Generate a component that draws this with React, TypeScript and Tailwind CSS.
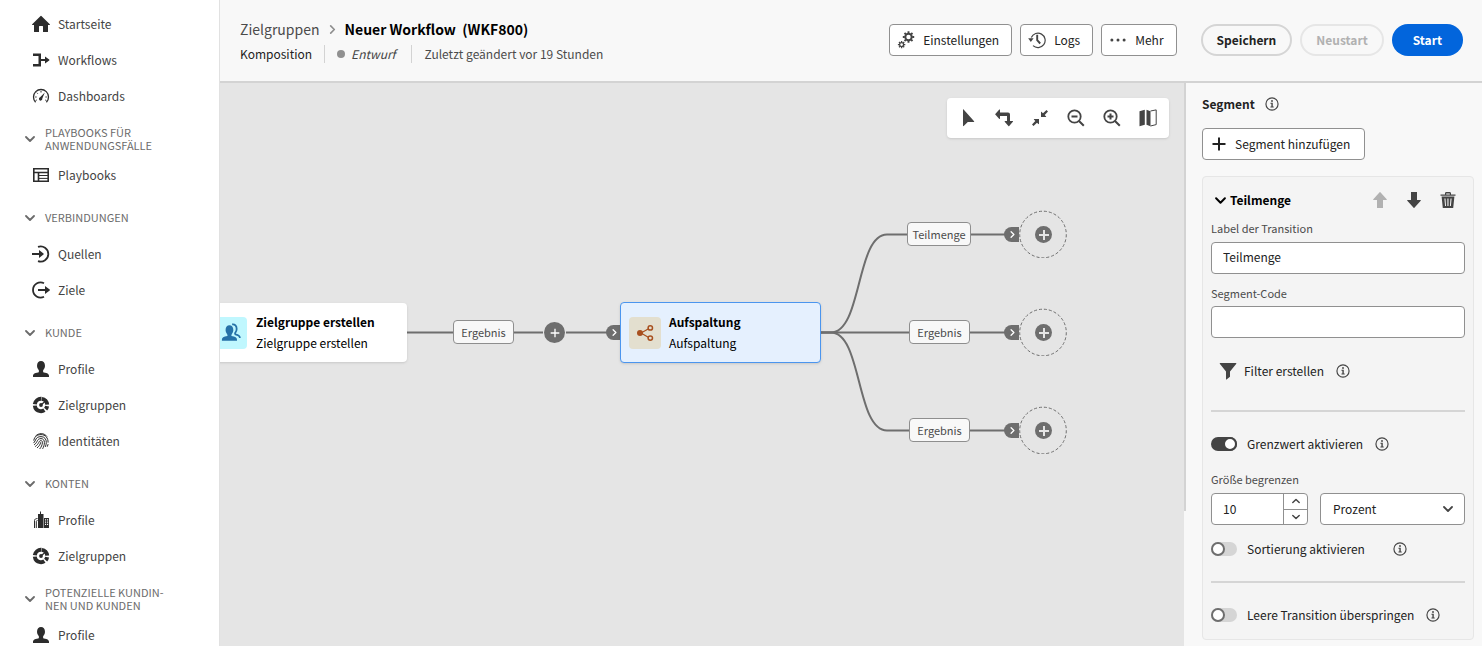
import type { ReactNode } from 'react';

type IconProps = { className?: string };

function Icon({ className = 'size-[18px]', children }: IconProps & { children: ReactNode }) {
  return (
    <svg viewBox="0 0 18 18" className={`shrink-0 ${className}`} fill="currentColor" aria-hidden="true">
      {children}
    </svg>
  );
}

const HomeIcon = () => (
  <Icon>
    <path d="M9.4.9 17.8 9.3c.3.3.1.8-.3.8H16v6.4a.5.5 0 0 1-.5.5H11v-5.500a.5.5 0 0 0-.5-.5h-3a.5.5 0 0 0-.5.5V17H2.500a.5.5 0 0 1-.5-.5v-6.400H.5c-.4 0-.6-.5-.3-.8L8.600.9a.6.6 0 0 1 .8 0z" />
  </Icon>
);
const WorkflowIcon = () => (
  <Icon>
    <path d="M1 2.500h8V8h4V5.500l4.200 3.100a.5.5 0 0 1 0 .8L13 12.500V10H9v5.500H1V13h5.500V5H1z" />
  </Icon>
);
const GaugeIcon = () => (
  <Icon>
    <path d="M3.600 15.200A7.500 7.500 0 1 1 14.400 15.200" fill="none" stroke="currentColor" strokeWidth="1.300" />
    <path d="M12.800 5.600 10.300 11.600a1.700 1.700 0 1 1-2.200-1.300z" />
    <path d="M9 4v1.500M4.800 5.700l1 1M3.200 10h1.400M13.400 10h1.400M3.600 13.500l1.200-.5M14.400 13.500l-1.200-.5" stroke="currentColor" strokeWidth="1" />
  </Icon>
);
const PlaybookIcon = () => (
  <Icon>
    <path d="M1.800 2.800h14.400v12.400H1.800zM1.800 6.500h14.400M6.500 6.500v8.700" fill="none" stroke="currentColor" strokeWidth="1.600" />
    <path d="M7 9.500h9M7 12.400h9" fill="none" stroke="currentColor" strokeWidth="1" />
  </Icon>
);
const SourceIcon = () => (
  <Icon>
    <path d="M6 1.900a7.600 7.600 0 1 1 0 14.200" fill="none" stroke="currentColor" strokeWidth="1.800" />
    <path d="M0 8.100h7V5l4.500 3.600a.5.5 0 0 1 0 .8L7 13V9.900H0z" />
  </Icon>
);
const TargetIcon = () => (
  <Icon>
    <path d="M12 2.200a7.600 7.600 0 1 0 0 13.600" fill="none" stroke="currentColor" strokeWidth="1.800" />
    <path d="M6 8.100h7V5l4.700 3.600a.5.5 0 0 1 0 .8L13 13V9.900H6z" />
  </Icon>
);
const UserIcon = () => (
  <Icon>
    <path d="M11.100 11.500v-.9a1.300 1.300 0 0 1 .4-.9A5.900 5.900 0 0 0 13 5.900C13 2.900 11.400 1 9 1S5 2.900 5 5.900a5.900 5.900 0 0 0 1.500 3.800 1.300 1.300 0 0 1 .4.900v.9a.9.9 0 0 1-.8.900C2.300 12.700 1 14.300 1 15.800V17h16v-1.200c0-1.500-1.300-3.100-5.100-3.400a.9.9 0 0 1-.8-.9z" />
  </Icon>
);
const SegmentsIcon = () => (
  <Icon>
    <circle cx="9" cy="9" r="6.200" fill="none" stroke="currentColor" strokeWidth="4" strokeDasharray="8.2 1.500 3.400 1.500 12.300 1.500 9.100 1.460" transform="rotate(-82 9 9)" />
    <circle cx="9" cy="9" r="1.900" />
    <path d="M9.500 8.500 15 3.800" stroke="currentColor" strokeWidth="1.200" />
  </Icon>
);
const FingerprintIcon = () => (
  <Icon>
    <g fill="none" stroke="currentColor" strokeWidth="1" strokeLinecap="round">
      <path d="M3.500 4.200C6.500.7 12 .6 14.800 4.300M1.800 8.200C2.600 3.800 6 2.600 9 2.600c4.500 0 7.200 3.400 7.100 7.600M1.800 10.800C4.200 8.500 3.200 4.700 9 4.600c3.600 0 5.400 2.700 5.300 5.900-.1 1.600-.3 2.800-.8 4" />
      <path d="M2.400 12.700C6.200 10 4.600 6.700 9 6.600c2.300 0 3.400 1.700 3.400 3.900 0 2.300-.7 4.300-1.600 6M3.500 14.400C7.400 11.800 6.500 8.700 8.900 8.600c1.200 0 1.600 1 1.500 2.200-.2 2.300-1.100 4.200-2.500 5.900M5.300 15.700c1.700-1.400 2.900-3 3.400-5.100M16 12.500l-.6 1.800" />
    </g>
  </Icon>
);
const BuildingsIcon = () => (
  <Icon>
    <path d="M6 3h2V.500h1V3h2.500v14H6z" />
    <path fillRule="evenodd" d="M12 7h5v10h-5zm1 1.200v1.300h1.100V8.200zm2 0v1.300h1.100V8.200zm-2 2.300v1.300h1.100v-1.300zm2 0v1.300h1.100v-1.300zm-2 2.300v1.300h1.100v-1.300zm2 0v1.300h1.100v-1.300z" />
    <path d="M2.500 17v-7.500c0-1.200 1.200-2 3-2M4.300 17v-6.500c0-.6.500-1 1.200-1" fill="none" stroke="currentColor" strokeWidth="1" />
  </Icon>
);
const GearsIcon = () => (
  <svg viewBox="0 0 18 18" className="size-[18px] shrink-0" fill="none" stroke="currentColor" aria-hidden="true">
    <circle cx="11.500" cy="6" r="3.200" strokeWidth="2" />
    <path d="M11.500.3v2M11.500 9.700v2M5.800 6h2M15.200 6h2M7.500 2l1.400 1.400M14.100 8.600l1.400 1.400M15.500 2l-1.400 1.400M8.900 8.600 7.500 10" strokeWidth="1.900" />
    <circle cx="4.600" cy="13.600" r="2" strokeWidth="1.300" />
    <path d="M4.600 9.900v1.500M4.600 15.800v1.500M.9 13.600h1.500M6.800 13.600h1.500M2 11l1 1M6.200 15.200l1 1M7.200 11l-1 1M3 15.200l-1 1" strokeWidth="1.300" />
  </svg>
);
const HistoryIcon = () => (
  <Icon>
    <path d="M3.300 6.600A7.200 7.200 0 1 1 5 14.600" fill="none" stroke="currentColor" strokeWidth="1.200" />
    <path d="M.2 7.300h5.400L2.800 11z" />
    <path d="M9.200 3.800v5.400l3 3.300" fill="none" stroke="currentColor" strokeWidth="1.900" />
  </Icon>
);
const MoreIcon = () => (
  <Icon>
    <circle cx="2.900" cy="9" r="1.500" />
    <circle cx="9" cy="9" r="1.500" />
    <circle cx="15.100" cy="9" r="1.500" />
  </Icon>
);
const PointerIcon = () => (
  <Icon>
    <path d="M4 .8v16c0 .4.400.6.700.3L8.800 13h6c.4 0 .6-.5.300-.7L4.600.5C4.400.2 4 .4 4 .8z" />
  </Icon>
);
const RotateIcon = () => (
  <Icon>
    <path d="M5 .900v2.600h8a2 2 0 0 1 2 2V12h2.600c.4 0 .5.400.3.700l-3.700 4.200a.5.5 0 0 1-.8 0l-3.700-4.200c-.2-.3 0-.7.300-.7H12V7H5v2.600c0 .4-.4.500-.7.300L.3 5.600a.5.5 0 0 1 0-.7L4.300.6c.3-.2.700-.1.700.3z" />
  </Icon>
);
const CollapseIcon = () => (
  <Icon>
    <path d="M10 3.200V8h4.800c.4 0 .5-.4.300-.6L13.700 6 17 2.500 15.500 1 12 4.300l-1.400-1.400c-.2-.2-.6-.1-.6.300zM8 14.800V10H3.200c-.4 0-.5.400-.3.600L4.300 12 1 15.500 2.500 17 6 13.700l1.400 1.400c.2.200.6.100.6-.3z" />
  </Icon>
);
const ZoomOutIcon = () => (
  <Icon>
    <path d="M12 12 16.800 16.800M4.500 7.500h6" stroke="currentColor" strokeWidth="2" />
    <circle cx="7.500" cy="7.500" r="6.200" fill="none" stroke="currentColor" strokeWidth="1.800" />
  </Icon>
);
const ZoomInIcon = () => (
  <Icon>
    <path d="M12 12 16.800 16.800M4.500 7.500h6M7.500 4.500v6" stroke="currentColor" strokeWidth="2" />
    <circle cx="7.500" cy="7.500" r="6.200" fill="none" stroke="currentColor" strokeWidth="1.800" />
  </Icon>
);
const MapIcon = () => (
  <Icon>
    <path d="M.500 2.300 5.800.8v15L.500 17.200zM7.500.8l4 1.500v15l-4-1.500z" />
    <path d="M11.500 2 17.200.9v14.700L11.500 17" fill="none" stroke="currentColor" strokeWidth="1" />
  </Icon>
);
const InfoIcon = () => (
  <Icon className="size-[14px]">
    <circle cx="9" cy="9" r="7.800" fill="none" stroke="currentColor" strokeWidth="1.500" />
    <circle cx="9" cy="5.200" r="1.200" />
    <path d="M7 7.500h3v4.700h1.200v1.300H7v-1.300h1.200V8.800H7z" />
  </Icon>
);
const PlusIcon = ({ className = 'size-[18px]' }: IconProps) => (
  <Icon className={className}>
    <path d="M9 2.500v13M2.500 9h13" stroke="currentColor" strokeWidth="2" />
  </Icon>
);
const ArrowIcon = ({ className = 'size-[18px]' }: IconProps) => (
  <Icon className={className}>
    <path d="M6 17V9H2.700c-.5 0-.7-.5-.4-.8L8.600 1.200a.5.500 0 0 1 .8 0l6.300 7c.3.300.1.800-.4.800H12v8z" />
  </Icon>
);
const TrashIcon = () => (
  <Icon>
    <path d="M1.500 3.600H6V2.400C6 1.600 6.600 1 7.400 1h3.200c.8 0 1.400.6 1.400 1.400v1.200h4.500v1.200h-15zM7.200 3.600h3.600V2.400H7.200z" fillRule="evenodd" />
    <path d="M2.600 5.500h12.800L14.200 17H3.800zM5.400 7.500l.7 7.600h.9L6.500 7.500zm3 0v7.600h1.100V7.500zm3.100 0-.6 7.600h1l.7-7.600z" fillRule="evenodd" />
  </Icon>
);
const FilterIcon = () => (
  <Icon>
    <path d="M1 1h16c.3 0 .5.400.3.700L11 9.500v5.200L7.500 17.600c-.2.200-.5 0-.5-.3V9.500L.8 1.700C.6 1.400.7 1 1 1z" />
  </Icon>
);
const AudienceIcon = () => (
  <Icon className="size-5">
    <path d="M9.400 11.800v-.9a1.200 1.200 0 0 1 .3-.8 5.600 5.600 0 0 0 1.400-3.600C11.100 3.600 9.700 2 7.600 2S4.100 3.600 4.100 6.500a5.600 5.600 0 0 0 1.400 3.600 1.200 1.200 0 0 1 .3.800v.9c-3.500.4-5 1.700-5 3.200V16h13.600v-1c0-1.500-1.500-2.800-5-3.200z" />
    <path d="M10 1.200c2.600-.4 4.100 1.500 4.100 4.300a5.400 5.400 0 0 1-1.300 3.400c-.3.400-.2 1.200.2 1.400 2.500.6 4 1.700 4 3.200" fill="none" stroke="currentColor" strokeWidth="1.600" />
  </Icon>
);
const SplitIcon = () => (
  <Icon>
    <path d="M5 9 13.500 4.200M5 9l8.500 4.900" stroke="currentColor" strokeWidth="1.200" />
    <circle cx="4" cy="9" r="3" />
    <circle cx="14.300" cy="3.900" r="2.200" fill="#e3dfcf" stroke="currentColor" strokeWidth="1.500" />
    <circle cx="14.300" cy="14.100" r="2.200" fill="#e3dfcf" stroke="currentColor" strokeWidth="1.500" />
  </Icon>
);
const Chevron = ({ className = 'size-[10px]' }: IconProps) => (
  <svg viewBox="0 0 10 10" className={`shrink-0 ${className}`} fill="none" stroke="currentColor" strokeWidth="1.800" strokeLinecap="round" strokeLinejoin="round" aria-hidden="true">
    <path d="M1 3l4 4 4-4" />
  </svg>
);

type NavEntry = { label: string; icon: ReactNode };
type NavGroup = { title?: string; items: NavEntry[] };

const navigation: NavGroup[] = [
  {
    items: [
      { label: 'Startseite', icon: <HomeIcon /> },
      { label: 'Workflows', icon: <WorkflowIcon /> },
      { label: 'Dashboards', icon: <GaugeIcon /> },
    ],
  },
  { title: 'PLAYBOOKS FÜR ANWENDUNGSFÄLLE', items: [{ label: 'Playbooks', icon: <PlaybookIcon /> }] },
  {
    title: 'VERBINDUNGEN',
    items: [
      { label: 'Quellen', icon: <SourceIcon /> },
      { label: 'Ziele', icon: <TargetIcon /> },
    ],
  },
  {
    title: 'KUNDE',
    items: [
      { label: 'Profile', icon: <UserIcon /> },
      { label: 'Zielgruppen', icon: <SegmentsIcon /> },
      { label: 'Identitäten', icon: <FingerprintIcon /> },
    ],
  },
  {
    title: 'KONTEN',
    items: [
      { label: 'Profile', icon: <BuildingsIcon /> },
      { label: 'Zielgruppen', icon: <SegmentsIcon /> },
    ],
  },
  { title: 'POTENZIELLE KUNDIN- NEN UND KUNDEN', items: [{ label: 'Profile', icon: <UserIcon /> }] },
];

function Sidebar() {
  return (
    <nav className="w-[220px] shrink-0 overflow-hidden border-r border-[#e1e1e1] bg-white pt-1.5">
      {navigation.map((group, index) => (
        <section key={index}>
          {group.title && (
            <button type="button" className="flex h-11 w-full items-center gap-[10px] pt-[7px] pl-[25px] text-left text-[11px] leading-[13px] text-[#6b6b6b]">
              <Chevron />
              <span className="w-[130px]">{group.title}</span>
            </button>
          )}
          <ul className="flex flex-col gap-px">
            {group.items.map((item) => (
              <li key={item.label}>
                <a href="#" className="flex h-[35px] items-center gap-2 pl-8 text-[#2c2c2c]">
                  {item.icon}
                  <span className="text-[#444]">{item.label}</span>
                </a>
              </li>
            ))}
          </ul>
        </section>
      ))}
    </nav>
  );
}

function Header() {
  const outlined = 'flex h-8 items-center gap-2 rounded border border-[#909090] bg-white pr-3 pl-[7px] text-[#222]';
  return (
    <header className="flex h-[83px] shrink-0 items-start justify-between border-b-2 border-[#d3d3d3] bg-[#f8f8f8] pr-[19px] pl-5">
      <div className="pt-[18px]">
        <div className="flex h-[22px] items-center text-sm">
          <a href="#" className="text-[#4b4b4b]">Zielgruppen</a>
          <Chevron className="mx-2 size-[9px] -rotate-90 text-[#8e8e8e]" />
          <h1 className="font-bold text-black">Neuer Workflow&nbsp; (WKF800)</h1>
        </div>
        <div className="mt-[5px] flex h-[18px] items-center">
          <span className="text-[#222]">Komposition</span>
          <span className="ml-3 h-[18px] w-px bg-[#d3d3d3]" />
          <span className="ml-3 size-2 rounded-full bg-[#909090]" />
          <span className="ml-1.5 text-[#444] italic">Entwurf</span>
          <span className="ml-4 h-[18px] w-px bg-[#d3d3d3]" />
          <span className="ml-3 text-[#4b4b4b]">Zuletzt geändert vor 19 Stunden</span>
        </div>
      </div>
      <div className="flex gap-2 pt-6">
        <button type="button" className={outlined}><span className="text-[#444]"><GearsIcon /></span>Einstellungen</button>
        <button type="button" className={outlined}><span className="text-[#444]"><HistoryIcon /></span>Logs</button>
        <button type="button" className={outlined}><span className="text-[#444]"><MoreIcon /></span>Mehr</button>
        <button type="button" className="ml-4 h-8 rounded-full border-2 border-[#d5d5d5] px-[14px] font-bold text-[#222]">Speichern</button>
        <button type="button" disabled className="h-8 rounded-full border-2 border-[#e6e6e6] px-[14px] font-bold text-[#b1b1b1]">Neustart</button>
        <button type="button" className="h-8 rounded-full bg-[#0265dc] px-[21px] font-bold text-white">Start</button>
      </div>
    </header>
  );
}

const tools = [
  { label: 'Auswählen', icon: <PointerIcon /> },
  { label: 'Ausrichten', icon: <RotateIcon /> },
  { label: 'Einpassen', icon: <CollapseIcon /> },
  { label: 'Verkleinern', icon: <ZoomOutIcon /> },
  { label: 'Vergrößern', icon: <ZoomInIcon /> },
  { label: 'Karte', icon: <MapIcon /> },
];

function EdgeLabel({ className, children }: { className: string; children: ReactNode }) {
  return (
    <span className={`absolute flex h-6 items-center justify-center rounded border border-[#8e8e8e] bg-[#f8f8f8] text-[11px] text-[#4b4b4b] ${className}`}>
      {children}
    </span>
  );
}

function InputPort({ className }: { className: string }) {
  return (
    <span className={`absolute flex h-[15px] w-[15px] items-center justify-center rounded-l-full bg-[#6e6e6e] pl-0.5 text-white ${className}`}>
      <Chevron className="size-[7px] -rotate-90" />
    </span>
  );
}

function Branch({ className, label, labelClassName }: { className: string; label: string; labelClassName: string }) {
  return (
    <div className={`absolute left-[687px] h-12 w-40 ${className}`}>
      <EdgeLabel className={`top-3 ${labelClassName}`}>{label}</EdgeLabel>
      <InputPort className="top-[17px] left-[97px]" />
      <svg viewBox="0 0 48 48" className="absolute top-0 left-[112px] size-12" aria-hidden="true">
        <circle cx="24" cy="24.500" r="23.300" fill="none" stroke="#6e6e6e" strokeWidth="1" strokeDasharray="3 2" />
      </svg>
      <button type="button" aria-label="Aktivität hinzufügen" className="absolute top-4 left-32 flex size-[17px] items-center justify-center rounded-full bg-[#6e6e6e] text-[#e5e5e5]">
        <Icon className="size-3">
          <path d="M9 1.500v15M1.500 9h15" stroke="currentColor" strokeWidth="3" />
        </Icon>
      </button>
    </div>
  );
}

function Canvas() {
  return (
    <section className="relative min-w-0 flex-1 overflow-hidden bg-[#e5e5e5]">
      <svg width="1000" height="563" className="absolute top-0 left-0 max-w-none" fill="none" stroke="#6e6e6e" strokeWidth="2" aria-hidden="true">
        <path d="M187 249.500H234M294 249.500H323M346 249.500H387M600 249.500H785" />
        <path d="M600 249.500h11C642 249.500 636 151.500 667 151.500H785" />
        <path d="M600 249.500h11C642 249.500 636 347.500 667 347.500H785" />
      </svg>

      <div className="absolute top-[220px] -left-[13px] flex h-[59px] w-[200px] items-center gap-[9px] rounded bg-white pl-2 shadow-sm">
        <span className="flex size-8 items-center justify-center rounded bg-[#c0f7fe] text-[#2672a8]"><AudienceIcon /></span>
        <div className="pb-0.5 leading-[21px] whitespace-nowrap text-black">
          <p className="font-bold">Zielgruppe erstellen</p>
          <p>Zielgruppe erstellen</p>
        </div>
      </div>
      <EdgeLabel className="top-[237px] left-[233px] w-[61px]">Ergebnis</EdgeLabel>
      <button type="button" aria-label="Aktivität einfügen" className="absolute top-[239px] left-[324px] flex size-[21px] items-center justify-center rounded-full bg-[#6e6e6e] text-white">
        <PlusIcon className="size-3" />
      </button>
      <InputPort className="top-[242px] left-[386px]" />
      <div className="absolute top-[219px] left-[400px] flex h-[61px] w-[201px] items-center gap-2 rounded border border-[#4b95ee] bg-[#e5f0fe] pl-2 shadow-sm">
        <span className="flex size-8 items-center justify-center rounded bg-[#e3dfcf] text-[#a8501f]"><SplitIcon /></span>
        <div className="pb-0.5 leading-[21px] whitespace-nowrap text-black">
          <p className="font-bold">Aufspaltung</p>
          <p>Aufspaltung</p>
        </div>
      </div>

      <Branch className="top-[127px]" label="Teilmenge" labelClassName="left-0 w-16" />
      <Branch className="top-[225px]" label="Ergebnis" labelClassName="left-[2px] w-[61px]" />
      <Branch className="top-[323px]" label="Ergebnis" labelClassName="left-[2px] w-[61px]" />

      <div className="absolute top-[15px] right-[15px] flex h-10 items-center rounded bg-white px-[3px] text-[#444] shadow-sm">
        {tools.map((tool) => (
          <button key={tool.label} type="button" aria-label={tool.label} className="flex h-10 w-9 items-center justify-center">
            {tool.icon}
          </button>
        ))}
      </div>
    </section>
  );
}

function Switch({ id, label, checked = false, infoClassName = 'ml-3' }: { id: string; label: string; checked?: boolean; infoClassName?: string }) {
  return (
    <div className="flex h-5 items-center">
      <input
        id={id}
        type="checkbox"
        role="switch"
        defaultChecked={checked}
        className="h-[14px] w-[26px] shrink-0 appearance-none rounded-full bg-[#d5d5d5] before:block before:size-[14px] before:rounded-full before:border-2 before:border-[#6e6e6e] before:bg-white checked:bg-[#444] checked:before:ml-3 checked:before:border-[#444]"
      />
      <label htmlFor={id} className="ml-[10px] text-[#222]">{label}</label>
      <span className={`text-[#444] ${infoClassName}`}><InfoIcon /></span>
    </div>
  );
}

function SegmentPanel() {
  const field = 'h-8 rounded border border-[#909090] bg-white text-[#222]';
  const fieldLabel = 'block text-[11px] leading-[14px] text-[#4b4b4b]';
  return (
    <aside className="w-[296px] shrink-0 overflow-hidden bg-[#f8f8f8] pr-2 pl-4">
      <div className="flex h-[45px] items-center gap-[10px] pb-[3px] text-[#444]">
        <h2 className="font-bold text-[#222]">Segment</h2>
        <InfoIcon />
      </div>
      <button type="button" className="flex h-8 items-center gap-[7px] rounded border border-[#909090] bg-white pr-[14px] pl-[7px] text-[#222]">
        <PlusIcon />Segment hinzufügen
      </button>

      <div className="mt-4 rounded border border-[#e6e6e6] bg-[#f4f4f4] px-2 pb-[14px]">
        <div className="flex h-11 items-center pt-[2px] text-[#444]">
          <button type="button" className="flex flex-1 items-center gap-1 pl-1 font-bold text-black">
            <Chevron className="size-[11px]" />Teilmenge
          </button>
          <div className="flex gap-4 pr-2">
            <button type="button" disabled aria-label="Nach oben" className="text-[#b1b1b1]"><ArrowIcon /></button>
            <button type="button" aria-label="Nach unten"><ArrowIcon className="size-[18px] rotate-180" /></button>
            <button type="button" aria-label="Löschen"><TrashIcon /></button>
          </div>
        </div>

        <label htmlFor="transition-label" className={fieldLabel}>Label der Transition</label>
        <input id="transition-label" type="text" defaultValue="Teilmenge" className={`mt-[7px] block w-full px-[11px] pb-[3px] ${field}`} />
        <label htmlFor="segment-code" className={`mt-3 ${fieldLabel}`}>Segment-Code</label>
        <input id="segment-code" type="text" className={`mt-1.5 block w-full px-[11px] pb-[3px] ${field}`} />

        <div className="mt-4 flex h-[34px] items-center gap-3 pl-2 text-[#444]">
          <button type="button" className="flex items-center gap-[7px]">
            <FilterIcon /><span className="text-[#222]">Filter erstellen</span>
          </button>
          <InfoIcon />
        </div>
        <hr className="my-[22px] border-t-2 border-[#d5d5d5]" />

        <Switch id="limit" label="Grenzwert aktivieren" checked />
        <label htmlFor="limit-size" className={`mt-[18px] ${fieldLabel}`}>Größe begrenzen</label>
        <div className="mt-[7px] flex gap-3">
          <div className={`flex w-[97px] overflow-hidden ${field}`}>
            <input id="limit-size" type="text" inputMode="numeric" defaultValue="10" className="w-[71px] pl-[11px]" />
            <div className="flex flex-1 flex-col border-l border-[#909090] text-[#444]">
              <button type="button" aria-label="Erhöhen" className="flex flex-1 items-center justify-center border-b border-[#909090]"><Chevron className="size-2 rotate-180" /></button>
              <button type="button" aria-label="Verringern" className="flex flex-1 items-center justify-center"><Chevron className="size-2" /></button>
            </div>
          </div>
          <div className="relative flex-1 text-[#444]">
            <select aria-label="Einheit" className={`w-full appearance-none px-3 ${field}`}>
              <option>Prozent</option>
            </select>
            <Chevron className="pointer-events-none absolute top-[11px] right-3 size-[10px]" />
          </div>
        </div>
        <div className="mt-[14px]"><Switch id="sorting" label="Sortierung aktivieren" infoClassName="ml-7" /></div>
        <hr className="my-[22px] border-t-2 border-[#d5d5d5]" />
        <Switch id="skip-empty" label="Leere Transition überspringen" />
      </div>
    </aside>
  );
}

export default function App() {
  return (
    <div className="flex h-screen bg-[#f8f8f8] font-['Noto_Sans_CJK_SC','Noto_Sans',sans-serif] text-xs leading-[18px]">
      <Sidebar />
      <main className="flex min-w-0 flex-1 flex-col">
        <Header />
        <div className="flex min-h-0 flex-1">
          <Canvas />
          <div className="h-[428px] w-0.5 shrink-0 bg-[#d3d3d3]" />
          <SegmentPanel />
        </div>
      </main>
    </div>
  );
}
